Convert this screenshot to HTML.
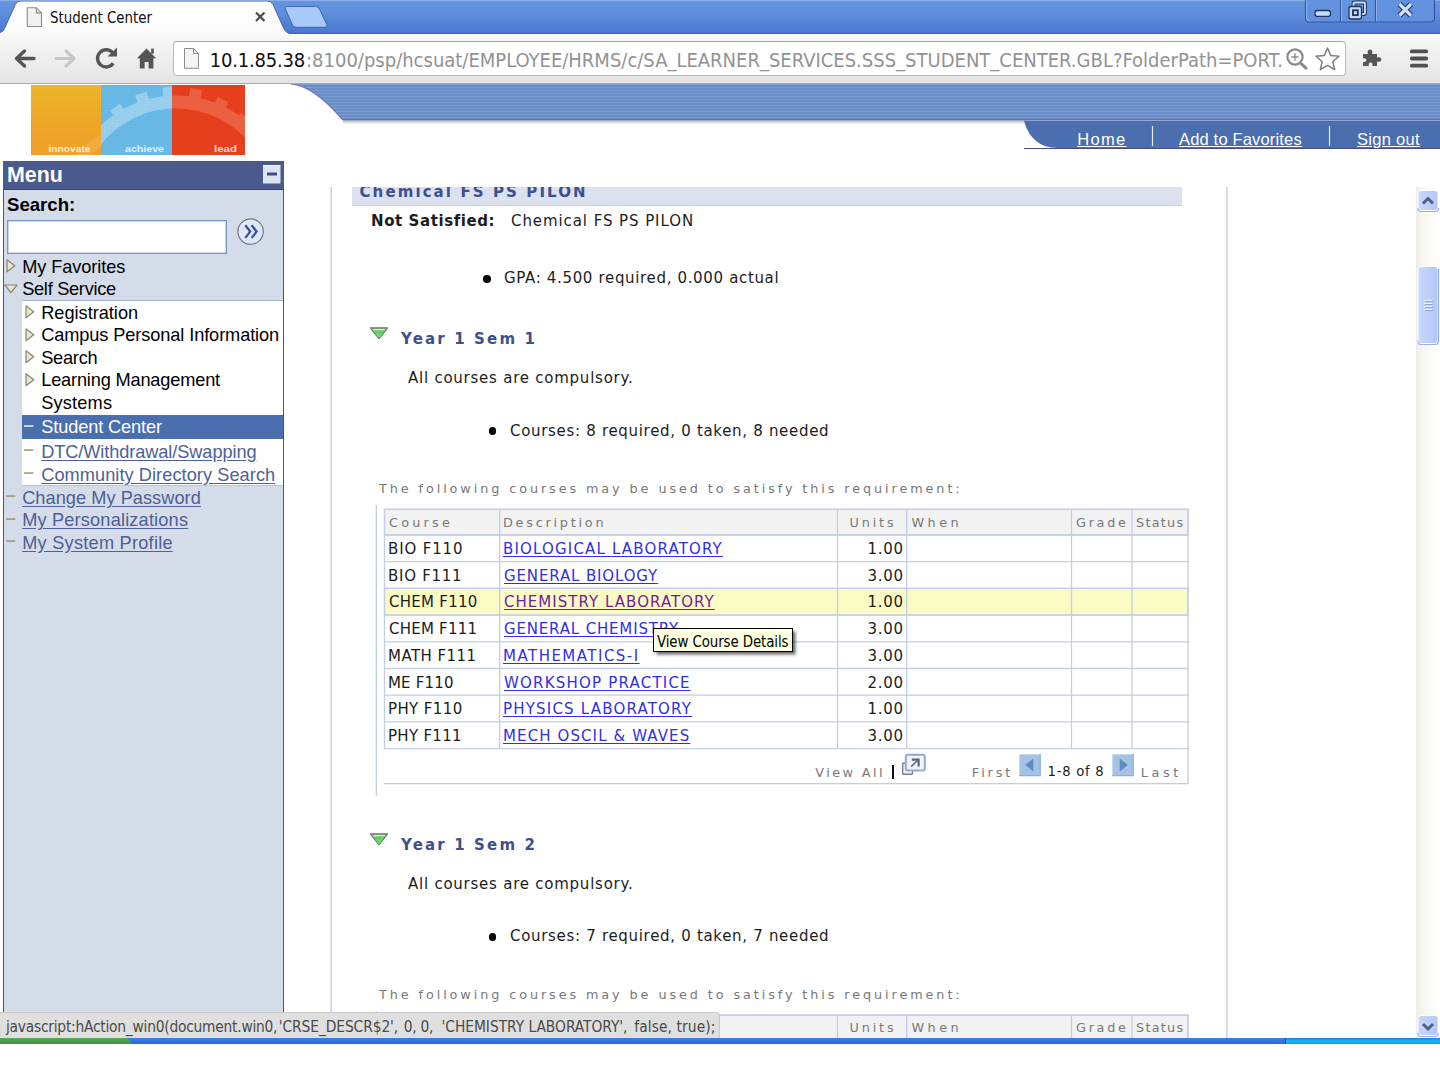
<!DOCTYPE html>
<html>
<head>
<meta charset="utf-8">
<title>Student Center</title>
<style>
*{box-sizing:border-box;margin:0;padding:0}
html,body{width:1440px;height:1080px;overflow:hidden;background:#fff}
body{position:relative;font-family:"Liberation Sans",sans-serif}
.abs{position:absolute}
.tah{font-family:"DejaVu Sans Condensed","DejaVu Sans","Liberation Sans",sans-serif}
.ver{font-family:"DejaVu Sans","Liberation Sans",sans-serif}
.ari{font-family:"Liberation Sans",sans-serif}
/* ---------- browser chrome ---------- */
#titlebar{left:0;top:0;width:1440px;height:34px;background:linear-gradient(#6596e0 0,#6090dd 35%,#5381d5 70%,#4c7ad1 93%,#3f65b2 100%)}
#toolbar{left:0;top:34px;width:1440px;height:50px;background:linear-gradient(#f9f9f9 0,#eeeeee 50%,#e4e4e4 100%);border-bottom:1px solid #ababab}
#addr{left:173px;top:41px;width:1173px;height:35px;background:#fff;border:1px solid #b9b9b9;border-top-color:#a6a6a6;border-radius:4px}
.url{top:47.500px;font-size:20px;line-height:24px;white-space:nowrap;color:#929292}
#tabtitle{left:50px;top:7.500px;font-size:14.9px;line-height:20px;color:#111;white-space:nowrap;transform:scaleY(1.1);transform-origin:0 80%}
/* ---------- page ---------- */
#page{left:0;top:84px;width:1440px;height:954px;background:#fff;overflow:hidden}

/* header */
#logo{left:31px;top:1px;width:214px;height:70px}
#nav a{position:absolute;top:0;color:#fff;text-decoration:underline;font-size:16.5px;line-height:20px;white-space:nowrap}
/* menu */
#menuhd{left:3px;top:77px;width:281px;height:29px;background:#4a5a8c}
#menubody{left:3px;top:105px;width:281px;height:860px;background:#d4dce9;border-left:1px solid #3f5590;border-right:1px solid #3f5590;border-top:1px solid #33488a}
.mi{position:absolute;font-size:18.2px;line-height:22px;white-space:nowrap;color:#000;font-family:"Liberation Sans",sans-serif}
.mi.lk{color:#4f6096;text-decoration:underline}
/* content */
.t{position:absolute;white-space:nowrap;font-family:"DejaVu Sans","Liberation Sans",sans-serif;font-size:15px;line-height:20px;color:#1c1c1c}
.hd{font-weight:bold;color:#3e4f8e}
.gy{color:#787878}
.lk{color:#2f2fe6;text-decoration:underline;text-underline-offset:2px;text-decoration-thickness:1px}
.vis{color:#741c98}
.stx{top:1016.500px;font-size:15.35px;line-height:20px;white-space:nowrap;color:#4a4a4a;transform:scaleY(1.08);transform-origin:0 80%}
</style>
</head>
<body>
<!-- CHROME -->
<div id="titlebar" class="abs"></div>
<svg class="abs" style="left:0;top:0" width="1440" height="35" viewBox="0 0 1440 35">
  <defs>
    <linearGradient id="tabg" x1="0" y1="0" x2="0" y2="1"><stop offset="0" stop-color="#ffffff"/><stop offset="1" stop-color="#fbfbfb"/></linearGradient>
  </defs>
  <!-- new tab button -->
  <path d="M285 8 Q284 6.500 286.500 6.500 L315.500 6.500 Q318.500 6.500 319.500 9 L327 25 Q327.800 27.300 325 27.300 L296.500 27.300 Q293.500 27.300 292.500 25 Z" fill="#a8caf6" stroke="#3f66b8" stroke-width="1"/>
  <!-- active tab -->
  <path d="M0 35 L0 32.500 Q3 32 4.500 28.500 L15.300 4.500 Q16.800 1 20.500 1 L267.500 1 Q271.500 1 273 4.500 L283.800 28.500 Q285.300 32 288.500 33.300 L289 35 Z" fill="url(#tabg)"/><path d="M0 32.500 Q3 32 4.500 28.500 L15.300 4.500 Q16.800 1 20.500 1 L267.500 1 Q271.500 1 273 4.500 L283.800 28.500 Q285.300 32 288.500 33.300" fill="none" stroke="#3f64b4" stroke-width="1"/>
  <path d="M0 0.500 H1440" stroke="#9dbaec" stroke-width="1" opacity=".7"/>
</svg>
<div id="toolbar" class="abs"></div>
<div id="tabtitle" class="abs tah">Student Center</div>
<div id="addr" class="abs"></div>
<div class="abs tah url" style="left:209.7px;letter-spacing:-0.19px;color:#111">10.1.85.38</div><div class="abs tah url" style="left:306.0px;letter-spacing:0.00px">:8100/psp/hcsuat/EMPLOYEE/HRMS/c/SA_LEARNER_SERVICES.SSS_STUDENT_CENTER.GBL?FolderPath=PORT.</div>
<svg class="abs" style="left:0;top:0" width="1440" height="84" viewBox="0 0 1440 84">
  <!-- tab favicon (blank page) -->
  <path d="M27.300 7.700 L36.300 7.700 L41.500 12.900 L41.500 26.500 L27.300 26.500 Z" fill="#f2f2f2" stroke="#8c8c8c" stroke-width="1.100"/>
  <path d="M36.300 7.700 L36.300 12.900 L41.500 12.900" fill="none" stroke="#8c8c8c" stroke-width="1.100"/>
  <!-- tab close -->
  <path d="M256 12.5 L264.5 21 M264.5 12.5 L256 21" stroke="#4a4a4a" stroke-width="2.2" fill="none"/>
  <!-- back -->
  <path d="M34 58.5 L18 58.5 M24.5 51 L16.5 58.5 L24.5 66" fill="none" stroke="#555" stroke-width="3.4" stroke-linecap="round" stroke-linejoin="round"/>
  <!-- forward -->
  <path d="M56 58.5 L72 58.5 M66 51 L74 58.5 L66 66" fill="none" stroke="#c6c6c6" stroke-width="3.2" stroke-linecap="round" stroke-linejoin="round"/>
  <!-- reload -->
  <path d="M113.2 63.3 A8.6 8.6 0 1 1 112.6 52.6" fill="none" stroke="#555" stroke-width="3.4"/>
  <path d="M107.5 56.6 L117 56.6 L117 47.6 Z" fill="#555"/>
  <!-- home -->
  <path d="M146.5 48.5 L137 58.3 L139.8 58.3 L139.8 68.5 L144.6 68.5 L144.6 62 L148.6 62 L148.6 68.5 L153.4 68.5 L153.4 58.3 L156.2 58.3 Z" fill="#555"/>
  <rect x="151.2" y="48.6" width="2.6" height="5" fill="#555"/>
  <!-- address page icon -->
  <path d="M184.500 48.500 L193.500 48.500 L198.500 53.500 L198.500 68.300 L184.500 68.300 Z" fill="#f4f4f4" stroke="#8c8c8c" stroke-width="1"/>
  <path d="M193.5 48.5 L193.5 53.5 L198.5 53.5" fill="none" stroke="#8c8c8c" stroke-width="1"/>
  <!-- zoom magnifier -->
  <circle cx="1295" cy="57" r="7.6" fill="none" stroke="#8a8a8a" stroke-width="2.2"/>
  <path d="M1300.5 63 L1306 68.2" stroke="#8a8a8a" stroke-width="3" stroke-linecap="round"/>
  <path d="M1291.3 57 L1298.7 57 M1295 53.3 L1295 60.7" stroke="#8a8a8a" stroke-width="1.3"/>
  <!-- star -->
  <path d="M1327.5 48 L1330.8 55.6 L1339 56.3 L1332.8 61.7 L1334.7 69.7 L1327.5 65.4 L1320.3 69.7 L1322.2 61.7 L1316 56.3 L1324.2 55.6 Z" fill="#fff" stroke="#7d7d7d" stroke-width="1.5" stroke-linejoin="round"/>
  <!-- puzzle piece -->
  <path d="M1363 54 L1368 54 Q1366.6 50 1370 49.6 Q1373.4 50 1372 54 L1377 54 L1377 57.6 Q1381 56.2 1381.3 59.5 Q1381 62.8 1377 61.4 L1377 66 L1372.4 66 Q1373 62.6 1370.6 62.6 Q1368.2 62.6 1368.8 66 L1363 66 L1363 62 Q1366.4 62.6 1366.4 60.1 Q1366.4 57.8 1363 58.4 Z" fill="#555"/>
  <!-- hamburger -->
  <rect x="1410" y="49.5" width="18" height="3.8" rx="1.6" fill="#505050"/>
  <rect x="1410" y="56.6" width="18" height="3.8" rx="1.6" fill="#505050"/>
  <rect x="1410" y="63.7" width="18" height="3.8" rx="1.6" fill="#505050"/>
  <!-- window controls -->
  <path d="M1305.5 0 L1305.5 18 Q1305.5 22 1310 22 L1430 22 Q1434.5 22 1434.5 18 L1434.5 0" fill="#6291de" stroke="#34579f" stroke-width="1.200"/>
  <path d="M1340.500 0 L1340.500 21.500 M1375.500 0 L1375.500 21.500" stroke="#34579f" stroke-width="1.200"/>
  <path d="M1306.5 0 L1306.5 18 Q1306.5 21 1310 21 M1341.5 0 L1341.5 21 M1376.5 0 L1376.5 21" stroke="#8ab0ec" stroke-width="1" fill="none"/>
  <rect x="1315" y="10.500" width="15.500" height="5.800" rx="2.200" fill="#c9dcf8" stroke="#22355f" stroke-width="1.300"/>
  <rect x="1353.500" y="2.500" width="11.500" height="11.500" rx="1.200" fill="none" stroke="#22355f" stroke-width="3.800"/>
  <rect x="1353.500" y="2.500" width="11.500" height="11.500" rx="1.200" fill="none" stroke="#c9dcf8" stroke-width="1.900"/>
  <rect x="1349" y="6.500" width="12.500" height="12.500" rx="2" fill="#c9dcf8" stroke="#22355f" stroke-width="1.300"/>
  <rect x="1353" y="10.300" width="4.800" height="4.800" fill="#d6e4fa" stroke="#22355f" stroke-width="1.900"/>
  <path d="M1399.500 4 L1411 15.500 M1411 4 L1399.500 15.500" stroke="#22355f" stroke-width="5.400" fill="none"/>
  <path d="M1399.500 4 L1411 15.500 M1411 4 L1399.500 15.500" stroke="#cfe0fa" stroke-width="3.200" fill="none"/>
</svg>
<!--CHROME-ICONS-->

<!-- PAGE -->
<div id="page" class="abs">
<svg class="abs" style="left:0;top:0" width="1440" height="70" viewBox="0 0 1440 70">
 <defs>
  <pattern id="stripe" width="4" height="3" patternUnits="userSpaceOnUse"><rect width="4" height="3" fill="#6b8dca"/><rect y="0" width="4" height="1" fill="#7a9ad2"/></pattern>
 </defs>
 <linearGradient id="shd" x1="0" y1="0" x2="0" y2="1"><stop offset="0" stop-color="#000" stop-opacity=".3"/><stop offset="1" stop-color="#000" stop-opacity="0"/></linearGradient>
 <rect x="343" y="36" width="682" height="4.500" fill="url(#shd)"/>
 <path d="M290.800 0 C310 1.500 329 20 342.500 36 L1440 36 L1440 0 Z" fill="url(#stripe)"/>
 <path d="M290.800 0 C310 1.500 329 20 342.500 35.600 L1440 35.600" fill="none" stroke="#6a62a6" stroke-width="1.200" opacity=".8"/>
 <path d="M1024 36.500 L1440 36.500 L1440 64 L1058 64 C1038 64 1028 52 1024 36.500 Z" fill="#4a6eae"/>
 <path d="M1024 64.500 L1440 64.500" stroke="#4b4a86" stroke-width="1.2"/>
 <path d="M1152.500 42 L1152.500 62 M1329.500 42 L1329.500 62" stroke="#e6ecf6" stroke-width="1.2"/>
</svg>
<div id="nav" class="abs ari" style="left:0;top:44.600px"><a style="left:1077.3px;letter-spacing:1.29px">Home</a><a style="left:1179.0px;letter-spacing:0.17px">Add to Favorites</a><a style="left:1357.0px;letter-spacing:0.29px">Sign out</a></div>
<svg id="logo" class="abs" viewBox="0 0 214 70">
 <defs>
  <clipPath id="cb"><rect x="70" y="0" width="71" height="70"/></clipPath>
  <clipPath id="cr"><rect x="141" y="0" width="73" height="70"/></clipPath>
  <clipPath id="co"><rect x="0" y="0" width="70" height="70"/></clipPath>
  <pattern id="grid" width="2" height="2" patternUnits="userSpaceOnUse"><path d="M0 0 H2 M0 0 V2" stroke="#000" stroke-opacity=".06" stroke-width=".7"/></pattern>
  <g id="gear">
   <circle cx="145" cy="120" r="103" fill="none" stroke-width="13"/>
  </g>
 </defs>
 <linearGradient id="og" x1="0" y1="0" x2="0" y2="1"><stop offset="0" stop-color="#efb92a"/><stop offset=".5" stop-color="#f2aa2b"/><stop offset="1" stop-color="#f2a42c"/></linearGradient><rect x="0" y="0" width="70" height="70" fill="url(#og)"/>
 <rect x="70" y="0" width="71" height="70" fill="#6bbce8"/>
 <rect x="141" y="0" width="73" height="70" fill="#e8411f"/>
 <g clip-path="url(#co)" opacity=".35"><circle cx="100" cy="110" r="62" fill="none" stroke="#f9c46a" stroke-width="10"/></g>
 <g clip-path="url(#cb)" stroke="#a4d7f2" fill="#a4d7f2" opacity=".85"><use href="#gear"/>
   <rect x="-6" y="-7" width="12" height="9" transform="translate(88 28) rotate(-33)" stroke="none"/>
   <rect x="-6" y="-7" width="12" height="9" transform="translate(112 15) rotate(-18)" stroke="none"/>
   <rect x="-6" y="-7" width="12" height="9" transform="translate(138 9) rotate(-4)" stroke="none"/>
 </g>
 <g clip-path="url(#cr)" stroke="#f0694a" fill="#f0694a" opacity=".85"><use href="#gear"/>
   <rect x="-6" y="-7" width="12" height="9" transform="translate(164 11) rotate(11)" stroke="none"/>
   <rect x="-6" y="-7" width="12" height="9" transform="translate(189 21) rotate(25)" stroke="none"/>
   <rect x="-6" y="-7" width="12" height="9" transform="translate(210 37) rotate(40)" stroke="none"/>
 </g>
 <rect x="0" y="0" width="214" height="70" fill="url(#grid)"/>
 <g font-family="Liberation Sans, sans-serif" font-weight="bold" font-size="9.600" fill="#fff" opacity=".8">
  <text x="17.500" y="66.500" textLength="42" lengthAdjust="spacingAndGlyphs">innovate</text><text x="94" y="66.500" textLength="39" lengthAdjust="spacingAndGlyphs">achieve</text><text x="183" y="66.500" textLength="23" lengthAdjust="spacingAndGlyphs">lead</text>
 </g>
</svg>
<div id="menuhd" class="abs"></div>
<div class="abs ari" style="left:7px;top:78px;font-weight:bold;font-size:21.4px;line-height:26px;color:#fff">Menu</div>
<svg class="abs" style="left:263px;top:81px" width="18" height="19" viewBox="0 0 18 19"><rect x="0" y="0" width="17.500" height="18.500" fill="#dde4f1"/><rect x="0" y="0" width="17.500" height="1.200" fill="#f4f6fb"/><rect x="4" y="7.500" width="10" height="3" fill="#3f4d82"/></svg>
<div id="menubody" class="abs"></div>
<div class="abs ari" style="left:7px;top:110px;font-weight:bold;font-size:18.6px;line-height:22px;color:#000">Search:</div>
<div class="abs" style="left:7px;top:136px;width:219.500px;height:34px;background:#fff;border:1px solid #7696c4;box-shadow:inset 0 0 0 .6px #a9bddb"></div>
<svg class="abs" style="left:236px;top:133px" width="29" height="29" viewBox="0 0 29 29"><circle cx="14.600" cy="14.600" r="12.700" fill="#dce7f7" stroke="#6c7088" stroke-width="1.100"/><path d="M9.300 8.300 L14.200 14.600 L9.300 20.900 M15.700 8.300 L20.600 14.600 L15.700 20.900" fill="none" stroke="#3a4a9a" stroke-width="2.200"/></svg>
<div class="abs" style="left:22px;top:216px;width:261px;height:186px;background:#fff;border-top:1px solid #9fb2d4;border-bottom:1px solid #b7c3dc"></div>
<div class="abs" style="left:22px;top:331px;width:261px;height:24px;background:#4a6eae"></div>
<div class="mi" style="left:22.2px;top:171.7px;letter-spacing:-0.08px">My Favorites</div>
<svg class="abs" style="left:6px;top:175px" width="10" height="14" viewBox="0 0 10 14"><path d="M1 0.800 L8.800 6.800 L1 12.800 Z" fill="#e6e4d8" stroke="#8d8468" stroke-width="1.200" stroke-linejoin="round"/></svg>
<div class="mi" style="left:22.2px;top:194.2px;letter-spacing:-0.28px">Self Service</div>
<svg class="abs" style="left:4px;top:200px" width="14" height="10" viewBox="0 0 14 10"><path d="M0.800 1 L13 1 L6.900 8.600 Z" fill="#e6e4d8" stroke="#8d8468" stroke-width="1.200" stroke-linejoin="round"/></svg>
<div class="mi" style="left:41.2px;top:217.9px;letter-spacing:-0.01px">Registration</div>
<svg class="abs" style="left:25px;top:221px" width="10" height="14" viewBox="0 0 10 14"><path d="M1 0.800 L8.800 6.800 L1 12.800 Z" fill="#e6e4d8" stroke="#8d8468" stroke-width="1.200" stroke-linejoin="round"/></svg>
<div class="mi" style="left:41.2px;top:240.2px;letter-spacing:-0.10px">Campus Personal Information</div>
<svg class="abs" style="left:25px;top:244px" width="10" height="14" viewBox="0 0 10 14"><path d="M1 0.800 L8.800 6.800 L1 12.800 Z" fill="#e6e4d8" stroke="#8d8468" stroke-width="1.200" stroke-linejoin="round"/></svg>
<div class="mi" style="left:41.2px;top:262.9px;letter-spacing:-0.24px">Search</div>
<svg class="abs" style="left:25px;top:266px" width="10" height="14" viewBox="0 0 10 14"><path d="M1 0.800 L8.800 6.800 L1 12.800 Z" fill="#e6e4d8" stroke="#8d8468" stroke-width="1.200" stroke-linejoin="round"/></svg>
<div class="mi" style="left:41.2px;top:285.2px;letter-spacing:-0.17px">Learning Management</div>
<svg class="abs" style="left:25px;top:289px" width="10" height="14" viewBox="0 0 10 14"><path d="M1 0.800 L8.800 6.800 L1 12.800 Z" fill="#e6e4d8" stroke="#8d8468" stroke-width="1.200" stroke-linejoin="round"/></svg>
<div class="mi" style="left:41.2px;top:307.9px;letter-spacing:0.19px">Systems</div>
<div class="mi" style="left:41.2px;top:332.2px;letter-spacing:-0.11px;color:#fff">Student Center</div>
<svg class="abs" style="left:23.8px;top:339.5px" width="11" height="5" viewBox="0 0 11 5"><rect x="0" y="1.300" width="9.400" height="1.500" fill="#eef1f8"/></svg>
<div class="mi lk" style="left:41.2px;top:356.9px;letter-spacing:-0.09px">DTC/Withdrawal/Swapping</div>
<svg class="abs" style="left:23.8px;top:364.2px" width="11" height="5" viewBox="0 0 11 5"><rect x="0" y="1.300" width="9.400" height="1.500" fill="#a09470"/></svg>
<div class="mi lk" style="left:41.2px;top:379.7px;letter-spacing:0.06px">Community Directory Search</div>
<svg class="abs" style="left:23.8px;top:387.0px" width="11" height="5" viewBox="0 0 11 5"><rect x="0" y="1.300" width="9.400" height="1.500" fill="#a09470"/></svg>
<div class="mi lk" style="left:22.2px;top:402.9px;letter-spacing:0.04px">Change My Password</div>
<svg class="abs" style="left:5.8px;top:410.2px" width="11" height="5" viewBox="0 0 11 5"><rect x="0" y="1.300" width="9.400" height="1.500" fill="#a09470"/></svg>
<div class="mi lk" style="left:22.2px;top:425.2px;letter-spacing:0.17px">My Personalizations</div>
<svg class="abs" style="left:5.8px;top:432.5px" width="11" height="5" viewBox="0 0 11 5"><rect x="0" y="1.300" width="9.400" height="1.500" fill="#a09470"/></svg>
<div class="mi lk" style="left:22.2px;top:447.9px;letter-spacing:0.24px">My System Profile</div>
<svg class="abs" style="left:5.8px;top:455.2px" width="11" height="5" viewBox="0 0 11 5"><rect x="0" y="1.300" width="9.400" height="1.500" fill="#a09470"/></svg>
<div id="frame" class="abs" style="left:290px;top:103px;width:1150px;height:851px;overflow:hidden">
<svg class="abs" style="left:0;top:0" width="1150" height="851" viewBox="0 0 1150 851"><path d="M41.19999999999999 0 V851 M936.9000000000001 0 V851" stroke="#c6cfe5" stroke-width="1.500" fill="none"/></svg>
<div class="abs" style="left:62px;top:0;width:830px;height:19px;background:#dbe1ee;border-bottom:1px solid #c9d1e4"></div>
<div class="t hd" style="left:69.5px;font-size:15px;letter-spacing:2.10px;font-weight:bold;top:-4.6px">Chemical FS PS PILON</div>
<div class="t " style="left:81.0px;font-size:15.0px;letter-spacing:0.58px;font-weight:bold;top:24.1px">Not Satisfied:</div>
<div class="t " style="left:221.0px;font-size:15.0px;letter-spacing:0.92px;top:24.1px">Chemical FS PS PILON</div>
<div class="t " style="left:214.0px;font-size:15.0px;letter-spacing:0.66px;top:81.1px">GPA: 4.500 required, 0.000 actual</div>
<div class="abs" style="left:193px;top:88px;width:7.500px;height:7.500px;border-radius:50%;background:#000"></div>
<svg class="abs" style="left:79px;top:139.0px" width="20" height="15" viewBox="0 0 20 15"><defs><linearGradient id="gt0" x1="0" y1="0" x2="0" y2="1"><stop offset="0" stop-color="#52c052"/><stop offset="1" stop-color="#86e586"/></linearGradient></defs><path d="M1.300 2.200 L18.700 2.200 L10 13 Z" fill="url(#gt0)" stroke="#3f7f45" stroke-width="1" stroke-linejoin="round"/><path d="M1 2 H19" stroke="#8d8d8d" stroke-width="1.800"/><path d="M4.200 3.700 H15.800" stroke="#e9f9e9" stroke-width="1.100"/></svg>
<div class="t hd" style="left:111.0px;font-size:15px;letter-spacing:2.15px;font-weight:bold;top:142.3px">Year 1 Sem 1</div>
<div class="t " style="left:118.0px;font-size:15.0px;letter-spacing:0.76px;top:181.1px">All courses are compulsory.</div>
<div class="abs" style="left:198.5px;top:240.3px;width:7.500px;height:7.500px;border-radius:50%;background:#000"></div>
<div class="t " style="left:220.0px;font-size:15.0px;letter-spacing:0.69px;top:233.6px">Courses: 8 required, 0 taken, 8 needed</div>
<div class="t gy" style="left:89.0px;font-size:12.8px;letter-spacing:2.91px;top:291.9px">The following courses may be used to satisfy this requirement:</div>
<svg class="abs" style="left:84px;top:318.0px" width="5" height="291" viewBox="0 0 5 291"><path d="M2.400 0 V291" stroke="#c6cfe5" stroke-width="1.500" fill="none"/></svg>
<svg class="abs" style="left:0;top:0" width="1150" height="851" viewBox="0 0 1150 851"><g stroke="#c3cde4" stroke-width="1.300" fill="none"><rect x="94.5" y="322.3" width="803.5" height="25.7" fill="#f2f2f2"/><rect x="94.5" y="401.4" width="803.5" height="26.7" fill="#fbfbc6"/><path d="M93.8 322.3 H898.7"/><path d="M93.8 348.0 H898.7"/><path d="M93.8 374.7 H898.7"/><path d="M93.8 401.4 H898.7"/><path d="M93.8 428.1 H898.7"/><path d="M93.8 454.8 H898.7"/><path d="M93.8 481.5 H898.7"/><path d="M93.8 508.2 H898.7"/><path d="M93.8 534.9 H898.7"/><path d="M93.8 561.6 H898.7"/><path d="M94.5 322.3 V561.6"/><path d="M209.7 322.3 V561.6"/><path d="M547.5 322.3 V561.6"/><path d="M616.7 322.3 V561.6"/><path d="M781.5 322.3 V561.6"/><path d="M842 322.3 V561.6"/><path d="M898 322.3 V561.6"/><path d="M898 561.6 V596.6 M93.8 596.6 H898.7"/></g></svg>
<div class="t gy" style="left:99.0px;font-size:12.8px;letter-spacing:3.24px;top:325.6px">Course</div>
<div class="t gy" style="left:213.0px;font-size:12.8px;letter-spacing:2.77px;top:325.6px">Description</div>
<div class="t gy" style="left:559.5px;font-size:12.8px;letter-spacing:2.86px;top:325.6px">Units</div>
<div class="t gy" style="left:621.5px;font-size:12.8px;letter-spacing:3.45px;top:325.6px">When</div>
<div class="t gy" style="left:786.0px;font-size:12.8px;letter-spacing:2.71px;top:325.6px">Grade</div>
<div class="t gy" style="left:846.0px;font-size:12.8px;letter-spacing:1.28px;top:325.6px">Status</div>
<div class="t " style="left:98.0px;font-size:15.0px;letter-spacing:0.86px;top:352.0px">BIO F110</div>
<div class="t lk" style="left:213.0px;font-size:15.0px;letter-spacing:1.17px;top:352.0px">BIOLOGICAL LABORATORY</div>
<div class="t " style="left:577.5px;font-size:15.0px;letter-spacing:0.72px;top:352.0px">1.00</div>
<div class="t " style="left:98.0px;font-size:15.0px;letter-spacing:0.71px;top:378.7px">BIO F111</div>
<div class="t lk" style="left:214.0px;font-size:15.0px;letter-spacing:0.86px;top:378.7px">GENERAL BIOLOGY</div>
<div class="t " style="left:577.5px;font-size:15.0px;letter-spacing:0.72px;top:378.7px">3.00</div>
<div class="t " style="left:99.0px;font-size:15.0px;letter-spacing:0.26px;top:405.4px">CHEM F110</div>
<div class="t lk vis" style="left:214.0px;font-size:15.0px;letter-spacing:1.04px;top:405.4px">CHEMISTRY LABORATORY</div>
<div class="t " style="left:577.5px;font-size:15.0px;letter-spacing:0.72px;top:405.4px">1.00</div>
<div class="t " style="left:99.0px;font-size:15.0px;letter-spacing:0.23px;top:432.1px">CHEM F111</div>
<div class="t lk" style="left:214.0px;font-size:15.0px;letter-spacing:0.83px;top:432.1px">GENERAL CHEMISTRY</div>
<div class="t " style="left:577.5px;font-size:15.0px;letter-spacing:0.72px;top:432.1px">3.00</div>
<div class="t " style="left:98.0px;font-size:15.0px;letter-spacing:0.44px;top:458.8px">MATH F111</div>
<div class="t lk" style="left:213.0px;font-size:15.0px;letter-spacing:1.48px;top:458.8px">MATHEMATICS-I</div>
<div class="t " style="left:577.5px;font-size:15.0px;letter-spacing:0.72px;top:458.8px">3.00</div>
<div class="t " style="left:98.0px;font-size:15.0px;letter-spacing:0.18px;top:485.5px">ME F110</div>
<div class="t lk" style="left:214.0px;font-size:15.0px;letter-spacing:1.21px;top:485.5px">WORKSHOP PRACTICE</div>
<div class="t " style="left:577.5px;font-size:15.0px;letter-spacing:0.72px;top:485.5px">2.00</div>
<div class="t " style="left:98.0px;font-size:15.0px;letter-spacing:0.39px;top:512.2px">PHY F110</div>
<div class="t lk" style="left:213.0px;font-size:15.0px;letter-spacing:1.20px;top:512.2px">PHYSICS LABORATORY</div>
<div class="t " style="left:577.5px;font-size:15.0px;letter-spacing:0.72px;top:512.2px">1.00</div>
<div class="t " style="left:98.0px;font-size:15.0px;letter-spacing:0.29px;top:538.9px">PHY F111</div>
<div class="t lk" style="left:213.0px;font-size:15.0px;letter-spacing:1.11px;top:538.9px">MECH OSCIL &amp; WAVES</div>
<div class="t " style="left:577.5px;font-size:15.0px;letter-spacing:0.72px;top:538.9px">3.00</div>
<div class="t gy" style="left:525.3px;font-size:12.8px;letter-spacing:2.42px;top:575.5px">View All</div>
<div class="abs" style="left:602px;top:577.9px;width:1.6px;height:14px;background:#111"></div>
<div class="t gy" style="left:681.8px;font-size:12.8px;letter-spacing:2.90px;top:575.5px">First</div>
<div class="t gy" style="left:850.7px;font-size:12.8px;letter-spacing:3.65px;top:575.5px">Last</div>
<div class="t " style="left:757.5px;font-size:13.2px;letter-spacing:0.74px;top:575.3px">1-8 of 8</div>
<svg class="abs" style="left:611px;top:566.0px" width="26" height="24" viewBox="0 0 26 24"><rect x="1.700" y="10" width="9.800" height="11.200" rx="1" fill="#f1f4f8" stroke="#7b8088" stroke-width="1.400"/><rect x="4.800" y="1.800" width="19" height="15.700" rx="2" fill="#f1f5fa" stroke="#8eaad8" stroke-width="2"/><path d="M10.200 13.600 L16.600 7.300" fill="none" stroke="#5c6a7c" stroke-width="1.500"/><path d="M10.800 6.700 H17.600 V13.400" fill="none" stroke="#56657a" stroke-width="2.200"/></svg>
<svg class="abs" style="left:728.6px;top:566.9px" width="22" height="23" viewBox="0 0 22 23"><rect x="0" y="0" width="21.500" height="22" fill="#a5c2e2"/><path d="M0.500 22 V0.500 H21.500" fill="none" stroke="#c6d9ee" stroke-width="1.2"/><path d="M0 21.700 H21.200 V0" fill="none" stroke="#8db0d8" stroke-width="1.2"/><path d="M14.300 4.600 L6.200 11 L14.300 17.400 Z" fill="#5a8bc5"/></svg>
<svg class="abs" style="left:821.7px;top:566.9px" width="22" height="23" viewBox="0 0 22 23"><rect x="0" y="0" width="21.500" height="22" fill="#a5c2e2"/><path d="M0.500 22 V0.500 H21.500" fill="none" stroke="#c6d9ee" stroke-width="1.2"/><path d="M0 21.700 H21.200 V0" fill="none" stroke="#8db0d8" stroke-width="1.2"/><path d="M7.700 4.600 L15.800 11 L7.700 17.400 Z" fill="#5a8bc5"/></svg>
<svg class="abs" style="left:79px;top:644.8px" width="20" height="15" viewBox="0 0 20 15"><defs><linearGradient id="gt505" x1="0" y1="0" x2="0" y2="1"><stop offset="0" stop-color="#52c052"/><stop offset="1" stop-color="#86e586"/></linearGradient></defs><path d="M1.300 2.200 L18.700 2.200 L10 13 Z" fill="url(#gt505)" stroke="#3f7f45" stroke-width="1" stroke-linejoin="round"/><path d="M1 2 H19" stroke="#8d8d8d" stroke-width="1.800"/><path d="M4.200 3.700 H15.800" stroke="#e9f9e9" stroke-width="1.100"/></svg>
<div class="t hd" style="left:111.0px;font-size:15px;letter-spacing:2.15px;font-weight:bold;top:648.1px">Year 1 Sem 2</div>
<div class="t " style="left:118.0px;font-size:15.0px;letter-spacing:0.76px;top:686.9px">All courses are compulsory.</div>
<div class="abs" style="left:198.5px;top:746.1px;width:7.500px;height:7.500px;border-radius:50%;background:#000"></div>
<div class="t " style="left:220.0px;font-size:15.0px;letter-spacing:0.69px;top:739.4px">Courses: 7 required, 0 taken, 7 needed</div>
<div class="t gy" style="left:89.0px;font-size:12.8px;letter-spacing:2.91px;top:797.7px">The following courses may be used to satisfy this requirement:</div>
<svg class="abs" style="left:84px;top:823.8px" width="5" height="291" viewBox="0 0 5 291"><path d="M2.400 0 V291" stroke="#c6cfe5" stroke-width="1.500" fill="none"/></svg>
<svg class="abs" style="left:0;top:0" width="1150" height="851" viewBox="0 0 1150 851"><g stroke="#c3cde4" stroke-width="1.300" fill="none"><rect x="94.5" y="828.1" width="803.5" height="25.7" fill="#f2f2f2"/><path d="M93.8 828.1 H898.7"/><path d="M93.8 853.8 H898.7"/><path d="M94.5 828.1 V853.8"/><path d="M209.7 828.1 V853.8"/><path d="M547.5 828.1 V853.8"/><path d="M616.7 828.1 V853.8"/><path d="M781.5 828.1 V853.8"/><path d="M842 828.1 V853.8"/><path d="M898 828.1 V853.8"/></g></svg>
<div class="t gy" style="left:99.0px;font-size:12.8px;letter-spacing:3.24px;top:831.4px">Course</div>
<div class="t gy" style="left:213.0px;font-size:12.8px;letter-spacing:2.77px;top:831.4px">Description</div>
<div class="t gy" style="left:559.5px;font-size:12.8px;letter-spacing:2.86px;top:831.4px">Units</div>
<div class="t gy" style="left:621.5px;font-size:12.8px;letter-spacing:3.45px;top:831.4px">When</div>
<div class="t gy" style="left:786.0px;font-size:12.8px;letter-spacing:2.71px;top:831.4px">Grade</div>
<div class="t gy" style="left:846.0px;font-size:12.8px;letter-spacing:1.28px;top:831.4px">Status</div>
<div class="abs" style="left:363px;top:441px;width:140px;height:24px;background:#ffffe1;border:1px solid #000;box-shadow:2.500px 2.500px 3px rgba(0,0,0,.6)"></div>
<div class="abs tah" style="left:367.0px;top:444.5px;font-size:14.9px;letter-spacing:-0.11px;line-height:20px;white-space:nowrap;color:#000;transform:scaleY(1.07);transform-origin:0 80%">View Course Details</div>
<svg class="abs" style="left:1125px;top:0" width="25" height="851" viewBox="0 0 25 851">
 <defs><linearGradient id="trk" x1="0" y1="0" x2="1" y2="0"><stop offset="0" stop-color="#eeede5"/><stop offset=".3" stop-color="#f8f7f2"/><stop offset="1" stop-color="#fdfdfb"/></linearGradient>
 <linearGradient id="thb" x1="0" y1="0" x2="1" y2="0"><stop offset="0" stop-color="#c9d7fb"/><stop offset=".6" stop-color="#bccdf8"/><stop offset="1" stop-color="#b4c6f4"/></linearGradient></defs>
 <rect x="1" y="0" width="22.700" height="851" fill="url(#trk)"/>
 <g>
  <rect x="3" y="3.500" width="20" height="20" rx="3" fill="url(#thb)" stroke="#fff" stroke-width="1"/><path d="M3 21 Q3 24.500 6 24.500 L20 24.500 Q23.500 24.500 23.500 21" fill="none" stroke="#9db2e4" stroke-width="1.200"/>
  <path d="M8 16.500 L13 11.500 L18 16.500" fill="none" stroke="#4d6185" stroke-width="3"/>
  <rect x="3" y="79.500" width="20" height="77" rx="3" fill="url(#thb)" stroke="#fff" stroke-width="1"/><path d="M3 154 Q3 157.500 6 157.500 L20 157.500 Q23.500 157.500 23.500 154 L23.500 82" fill="none" stroke="#98aee2" stroke-width="1.200"/>
  <path d="M9 113.500 H17 M9 116.500 H17 M9 119.500 H17 M9 122.500 H17" stroke="#eef3fe" stroke-width="1"/><path d="M10 114.500 H18 M10 117.500 H18 M10 120.500 H18 M10 123.500 H18" stroke="#8ca7e6" stroke-width="1"/>
  <rect x="3" y="828.500" width="20" height="20" rx="3" fill="url(#thb)" stroke="#fff" stroke-width="1"/><path d="M3 846 Q3 849.500 6 849.500 L20 849.500 Q23.500 849.500 23.500 846" fill="none" stroke="#9db2e4" stroke-width="1.200"/>
  <path d="M8 837 L13 842 L18 837" fill="none" stroke="#4d6185" stroke-width="3"/>
 </g>
</svg>
</div>
</div>
<div class="abs" style="left:0;top:1012px;width:720px;height:27px;background:#dfdfdf;border-top:1px solid #c8c8c8;border-right:1px solid #c8c8c8;border-top-right-radius:4px"></div>
<div class="abs tah stx" style="left:6.0px;letter-spacing:-0.23px">javascript:hAction_win0(document.win0,</div><div class="abs tah stx" style="left:278.8px;letter-spacing:-0.08px">'CRSE_DESCR$2',</div><div class="abs tah stx" style="left:403.8px;letter-spacing:-0.28px">0, 0,</div><div class="abs tah stx" style="left:441.5px;letter-spacing:-0.02px">'CHEMISTRY LABORATORY',</div><div class="abs tah stx" style="left:634.3px;letter-spacing:0.09px">false, true);</div>
<div class="abs" style="left:0;top:1038px;width:1440px;height:6px;background:linear-gradient(#3a80ea,#2a67d6)"></div>
<div class="abs" style="left:0;top:1038px;width:131px;height:6px;background:linear-gradient(#5aa75a,#3d8f3d);border-top-right-radius:6px"></div>
<div class="abs" style="left:1285px;top:1038px;width:155px;height:6px;background:linear-gradient(#1a78dc 0,#12aef0 35%,#14b2f0 75%,#0f8fe4 100%);border-left:1px solid #1a4fa8"></div>
<div class="abs" style="left:0;top:1044px;width:1440px;height:36px;background:#fff"></div>
</body>
</html>
